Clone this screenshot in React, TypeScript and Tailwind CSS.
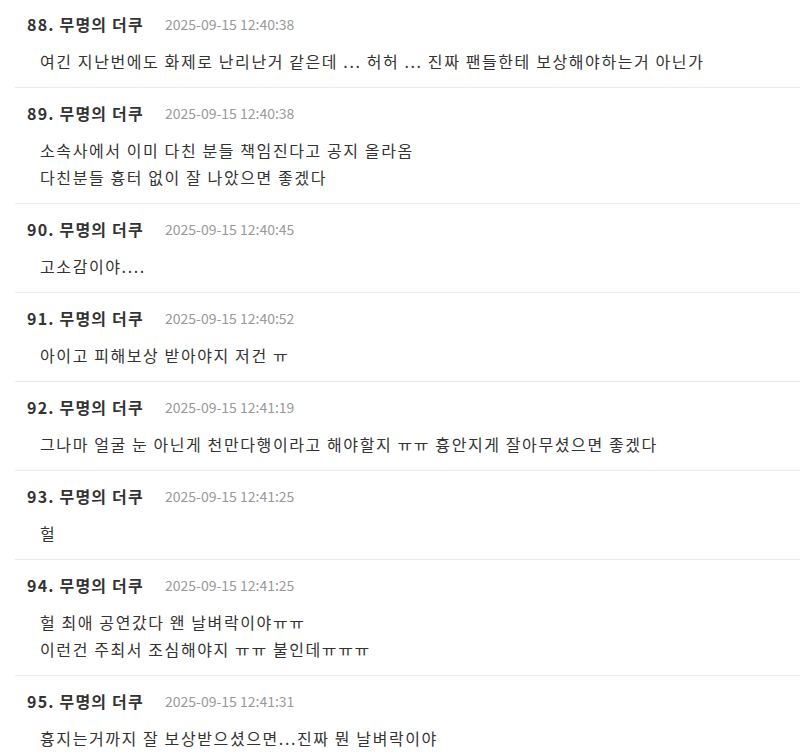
const comments = [
  { no: 88, time: '2025-09-15 12:40:38', lines: ['여긴 지난번에도 화제로 난리난거 같은데 ... 허허 ... 진짜 팬들한테 보상해야하는거 아닌가'] },
  { no: 89, time: '2025-09-15 12:40:38', lines: ['소속사에서 이미 다친 분들 책임진다고 공지 올라옴', '다친분들 흉터 없이 잘 나았으면 좋겠다'] },
  { no: 90, time: '2025-09-15 12:40:45', lines: ['고소감이야....'] },
  { no: 91, time: '2025-09-15 12:40:52', lines: ['아이고 피해보상 받아야지 저건 ㅠ'] },
  { no: 92, time: '2025-09-15 12:41:19', lines: ['그나마 얼굴 눈 아닌게 천만다행이라고 해야할지 ㅠㅠ 흉안지게 잘아무셨으면 좋겠다'] },
  { no: 93, time: '2025-09-15 12:41:25', lines: ['헐'] },
  { no: 94, time: '2025-09-15 12:41:25', lines: ['헐 최애 공연갔다 왠 날벼락이야ㅠㅠ', '이런건 주최서 조심해야지 ㅠㅠ 불인데ㅠㅠㅠ'] },
  { no: 95, time: '2025-09-15 12:41:31', lines: ['흉지는거까지 잘 보상받으셨으면...진짜 뭔 날벼락이야'] },
];

export default function App() {
  return (
    <div
      className="min-h-screen bg-white overflow-hidden"
      style={{ fontFamily: '"Noto Sans CJK KR", "Noto Sans", sans-serif' }}
    >
      <ul className="ml-[15px] -mt-[2px]">
        {comments.map((c) => (
          <li key={c.no} className="border-t border-[#ebebeb] pt-[13px] pb-[12px]">
            <div className="flex items-center h-6 pl-3">
              <span className="text-[16px] font-bold text-[#333] tracking-[1.2px]">
                {c.no}. 무명의 더쿠
              </span>
              <span className="ml-[21px] text-[14px] text-[#999]">{c.time}</span>
            </div>
            <div className="mt-[12px] pl-[25px] text-[16px] leading-[27px] text-[#333] tracking-[1.6px]">
              {c.lines.map((l, i) => (
                <p key={i}>{l}</p>
              ))}
            </div>
          </li>
        ))}
      </ul>
    </div>
  );
}
